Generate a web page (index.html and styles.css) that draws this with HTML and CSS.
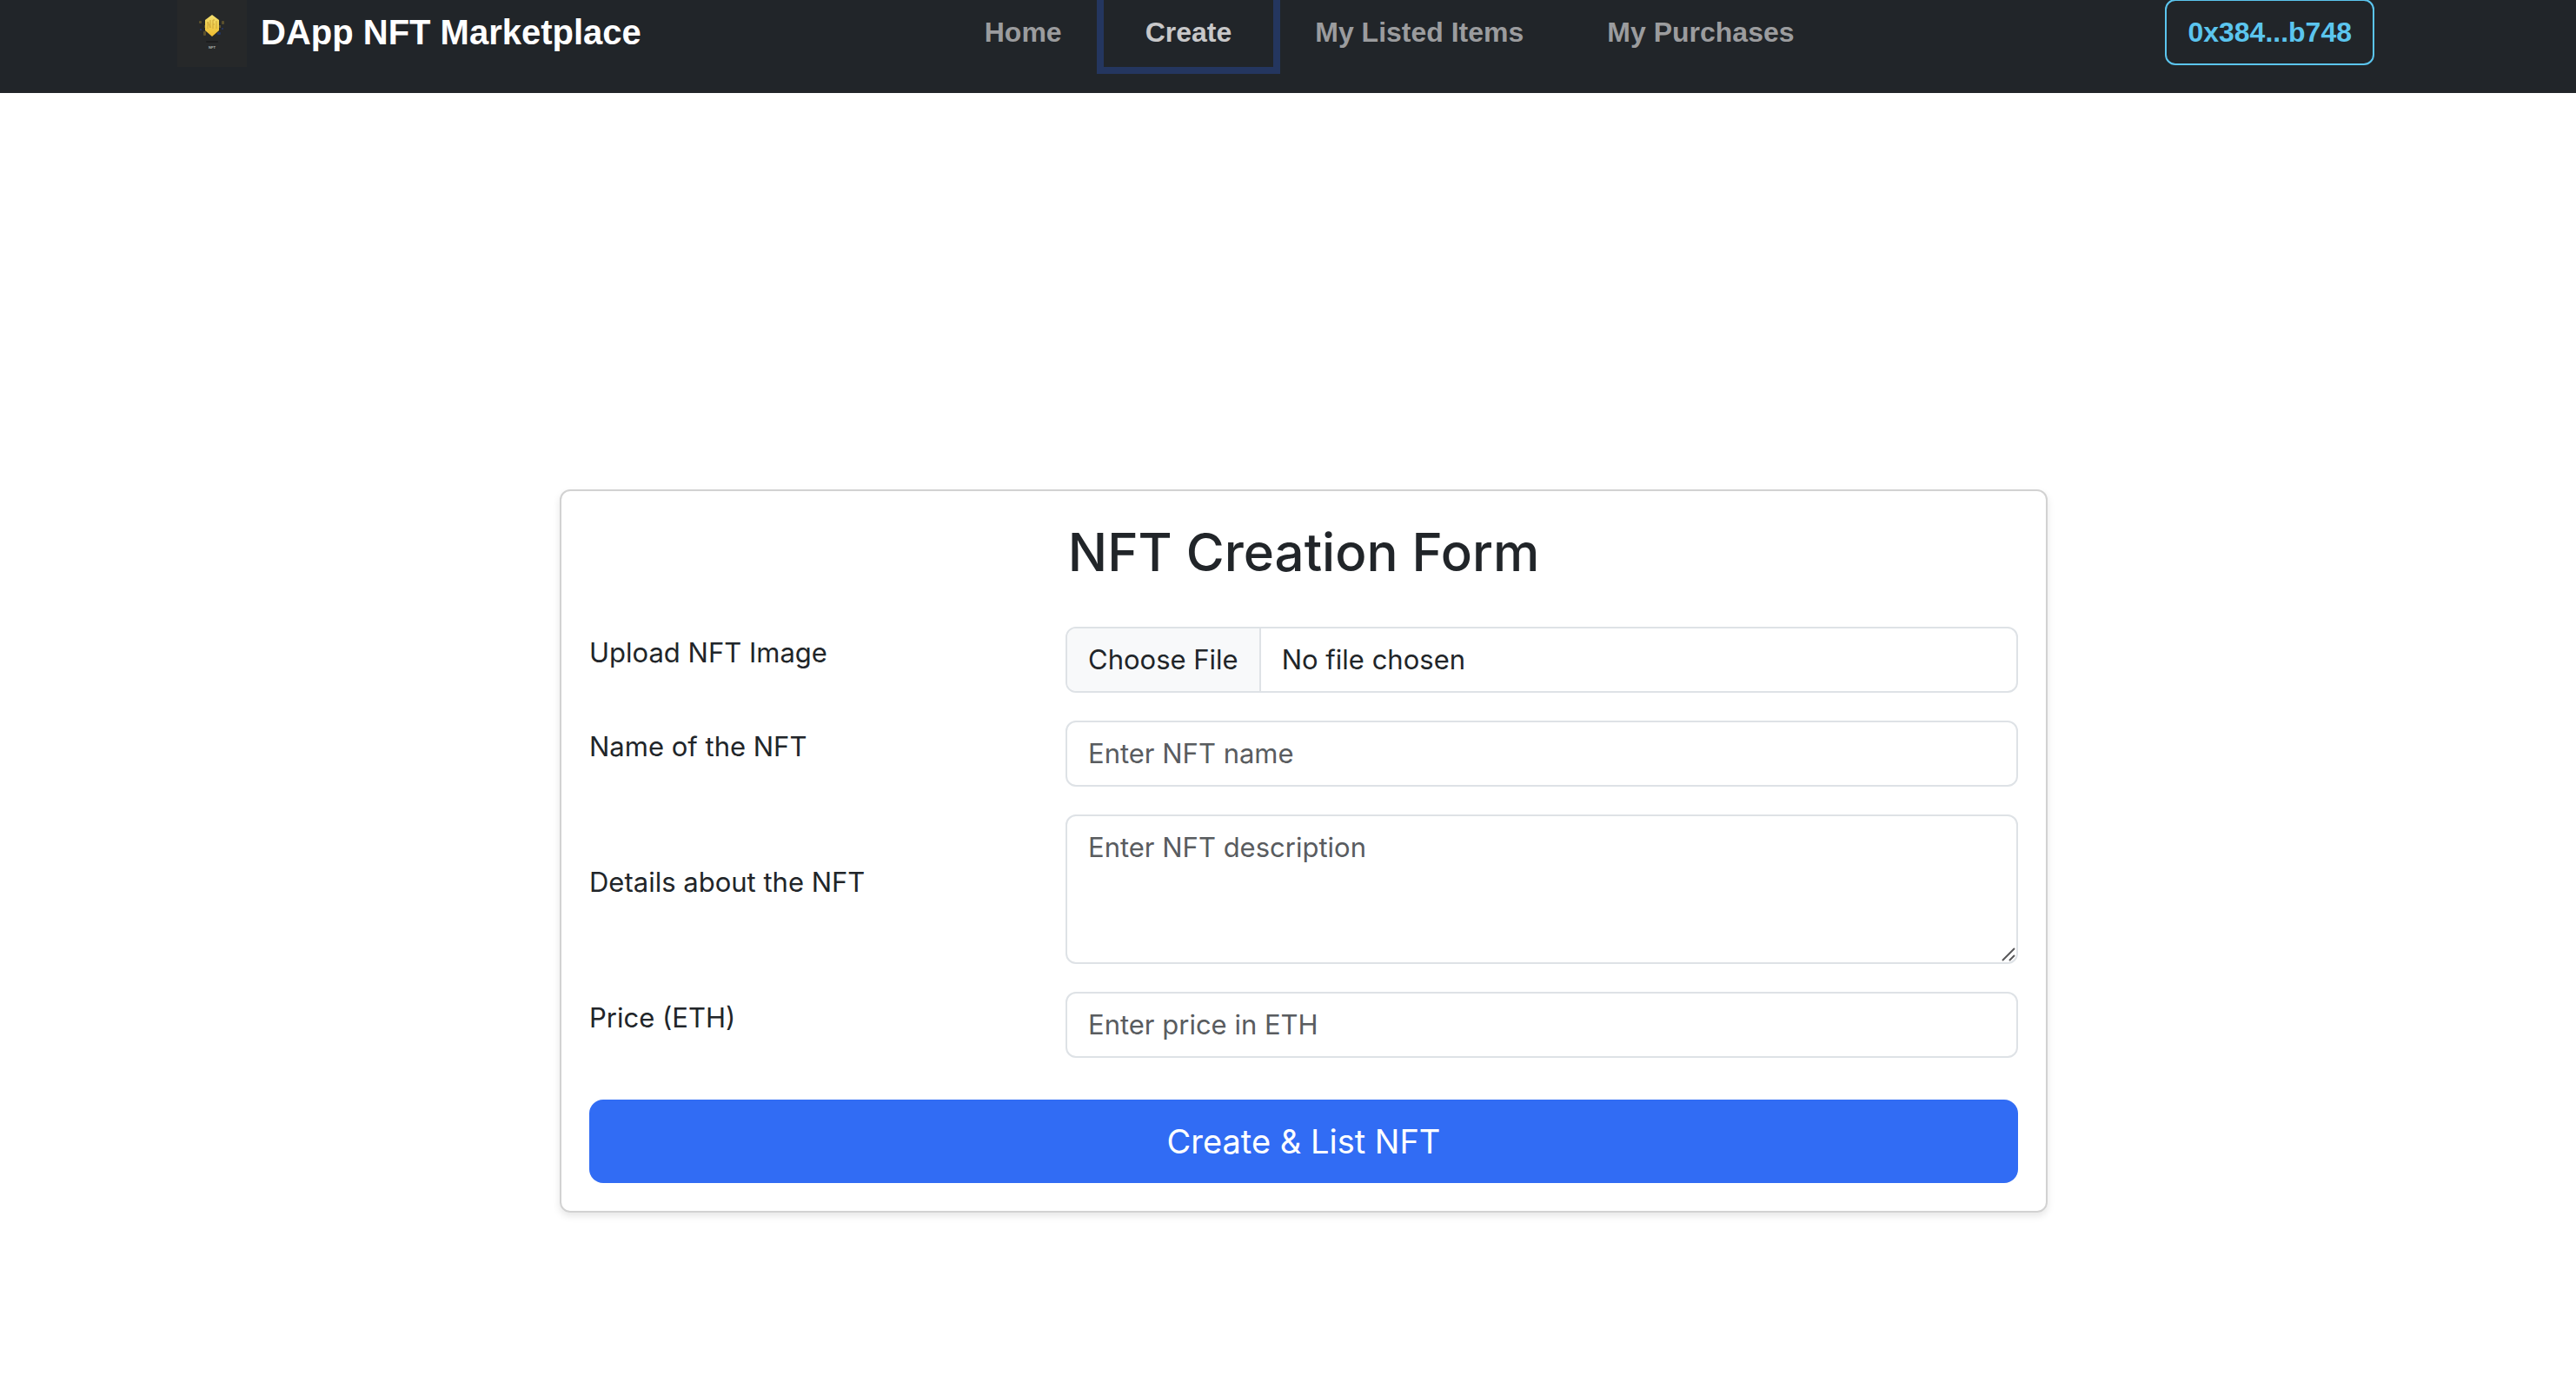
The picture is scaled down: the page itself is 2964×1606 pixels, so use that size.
FILE: index.html
```html
<!DOCTYPE html>
<html lang="en">
<head>
  <meta charset="utf-8">
  <meta name="viewport" content="width=device-width, initial-scale=1">
  <title>DApp NFT Marketplace</title>
  <link rel="stylesheet" href="styles.css">
</head>
<body>
  <header class="navbar">
    <div class="navbar-inner">
      <a class="brand" href="#">
        <svg class="brand-logo" viewBox="0 0 80 80" aria-hidden="true">
          <defs>
            <linearGradient id="coin" x1="0" y1="0" x2="0" y2="1">
              <stop offset="0" stop-color="#f5e070"/>
              <stop offset="0.5" stop-color="#f0cf4f"/>
              <stop offset="1" stop-color="#eebb30"/>
            </linearGradient>
          </defs>
          <rect width="80" height="80" fill="#262829"/>
          <g fill="#5b502c">
            <rect x="25" y="27" width="3" height="3" rx="1"/>
            <rect x="51" y="27" width="3" height="4" rx="1"/>
            <rect x="30" y="39" width="3" height="5" rx="1"/>
            <rect x="31" y="32" width="2" height="3"/>
            <rect x="48" y="32" width="2" height="3"/>
          </g>
          <g fill="#25345e">
            <rect x="26" y="36" width="2" height="2"/>
            <rect x="51" y="35" width="2" height="2"/>
            <rect x="46" y="40" width="4" height="3" rx="1"/>
          </g>
          <path d="M40 20 L48 26 V38 L40 45 L32 38 V26 Z" fill="url(#coin)"/>
          <path d="M35 36 V28 L38 35 V26 M41 36 V26 H43 M41 31 H43 M45 27 V36" fill="none" stroke="#cda538" stroke-width="1"/>
          <rect x="33" y="50" width="14" height="2" rx="1" fill="#1c1d1e"/>
          <text x="40" y="59" text-anchor="middle" font-size="4" fill="#b5b5b5">NFT</text>
        </svg>
        DApp NFT Marketplace
      </a>
      <nav class="nav" aria-label="Main">
        <a class="nav-link" href="#">Home</a>
        <a class="nav-link nav-link-focus" href="#" aria-current="page">Create</a>
        <a class="nav-link" href="#">My Listed Items</a>
        <a class="nav-link" href="#">My Purchases</a>
      </nav>
      <button class="account" type="button">0x384...b748</button>
    </div>
  </header>

  <main class="main">
    <form class="card">
      <h1 class="card-title">NFT Creation Form</h1>
      <div class="row">
        <label class="label" for="image">Upload NFT Image</label>
        <input class="control control-file" id="image" type="file">
      </div>
      <div class="row">
        <label class="label" for="name">Name of the NFT</label>
        <input class="control" id="name" type="text" placeholder="Enter NFT name">
      </div>
      <div class="row">
        <label class="label" for="details">Details about the NFT</label>
        <div class="textarea-wrap">
          <textarea class="control" id="details" rows="3" placeholder="Enter NFT description"></textarea>
          <svg class="grip" viewBox="0 0 16 16" aria-hidden="true">
            <path d="M1 15 L15 1 M9 15 L15 9" fill="none" stroke="#58585a" stroke-width="2"/>
          </svg>
        </div>
      </div>
      <div class="row">
        <label class="label" for="price">Price (ETH)</label>
        <input class="control" id="price" type="number" placeholder="Enter price in ETH">
      </div>
      <button class="submit" type="button">Create &amp; List NFT</button>
    </form>
  </main>
</body>
</html>
```

FILE: styles.css
```css
*,
*::before,
*::after {
  box-sizing: border-box;
}

body {
  margin: 0;
  background: #fff;
  color: #212529;
  font-family: Inter, "Liberation Sans", sans-serif;
  font-size: 31px;
  line-height: 48px;
}

/* Navigation bar, partly scrolled past the top edge */
.navbar {
  margin-top: -33px;
  padding: 30px 0;
  background: #212529;
  font-family: "Liberation Sans", Arial, sans-serif;
  font-weight: 700;
}

.navbar-inner {
  display: flex;
  align-items: center;
  max-width: 2640px;
  margin: 0 auto;
  padding: 0 70px 0 42px;
}

.brand {
  display: flex;
  align-items: center;
  gap: 16px;
  margin-right: 32px;
  color: #fff;
  font-size: 40px;
  text-decoration: none;
  white-space: nowrap;
}

.brand-logo {
  width: 80px;
  height: 80px;
}

.nav {
  display: flex;
  margin: 0 auto;
}

.nav-link {
  padding: 16px 48px;
  color: #9b9c9e;
  font-size: 32px;
  text-decoration: none;
  white-space: nowrap;
}

.nav-link-focus {
  color: #c8c8c9;
  box-shadow: 0 0 0 8px #24365f;
}

.account {
  margin-left: 64px;
  padding: 12px 24px;
  border: 2px solid #5bc5ee;
  border-radius: 12px;
  background: transparent;
  color: #5bc5ee;
  font: inherit;
  font-size: 32px;
}

/* Creation form */
.main {
  padding: 456px 0 48px 36px;
}

.card {
  max-width: 1712px;
  margin: 0 auto;
  padding: 32px;
  border: 2px solid #d2d2d2;
  border-radius: 12px;
  box-shadow: 0 4px 8px rgba(0, 0, 0, 0.1);
}

.card-title {
  margin: 0 0 48px;
  font-size: 60px;
  font-weight: 500;
  line-height: 76px;
  text-align: center;
}

.row {
  display: grid;
  grid-template-columns: 1fr 2fr;
  align-items: center;
  margin-bottom: 32px;
}

.label {
  margin-bottom: 16px;
}

.control {
  display: block;
  width: 100%;
  padding: 12px 24px;
  border: 2px solid #dee2e6;
  border-radius: 12px;
  background: #fff;
  color: #212529;
  font: inherit;
}

.control::placeholder {
  color: #595c5f;
  opacity: 1;
}

.textarea-wrap {
  position: relative;
}

textarea.control {
  resize: vertical;
}

textarea.control::-webkit-resizer {
  background: transparent;
}

.grip {
  position: absolute;
  right: 3px;
  bottom: 3px;
  width: 16px;
  height: 16px;
  pointer-events: none;
}

.control-file {
  overflow: hidden;
}

.control-file::file-selector-button {
  margin: -12px 24px -12px -24px;
  padding: 12px 24px;
  border: 0 solid #dee2e6;
  border-right-width: 2px;
  border-radius: 0;
  background: #f8f9fa;
  color: #212529;
  font: inherit;
}

.submit {
  display: block;
  width: 100%;
  margin-top: 48px;
  padding: 18px 32px;
  border: 0;
  border-radius: 16px;
  background: #316cf4;
  color: #fff;
  font: inherit;
  font-size: 38px;
  line-height: 60px;
}
```
